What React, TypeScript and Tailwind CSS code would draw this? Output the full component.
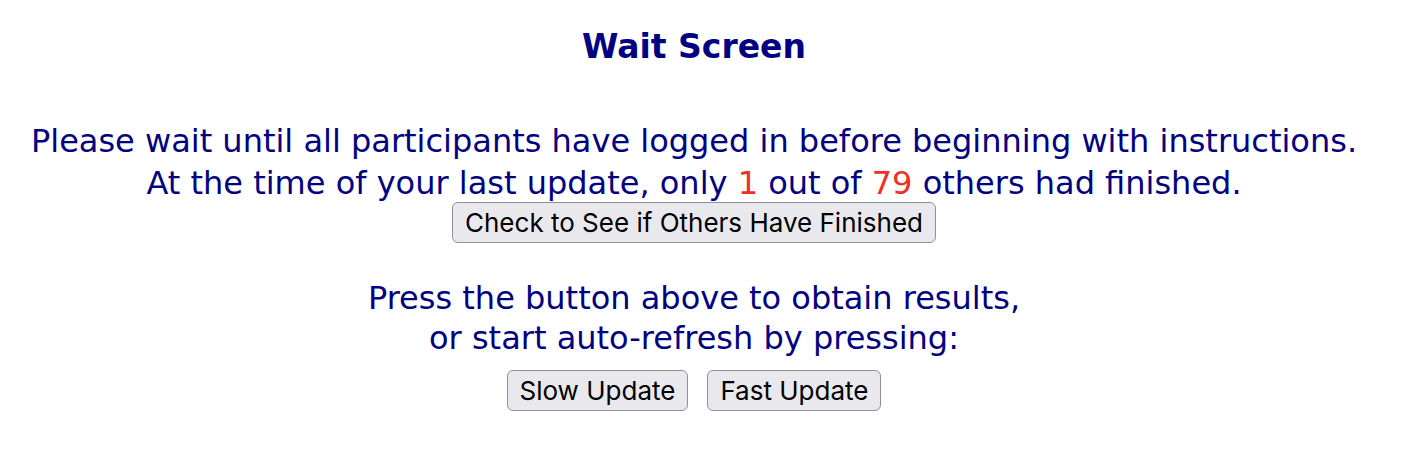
import React from 'react';

const btn =
  "h-[41px] px-[12px] rounded-[6px] border-[1.5px] border-[#8f8f9d] bg-[#e9e9ed] text-black text-[26px] leading-none font-['Inter','Liberation_Sans',sans-serif]";

const App: React.FC = () => {
  return (
    <div className="w-[1410px] h-[454px] bg-white pr-[22px] flex flex-col items-center font-['DejaVu_Sans','Verdana',sans-serif] text-[#000080]">
      <h1 className="mt-[24px] h-[46px] flex items-center text-[33px] font-bold font-['Comic_Sans_MS','DejaVu_Sans',cursive]">
        Wait Screen
      </h1>

      <div className="mt-[50px] text-[32px] leading-[42px] text-center whitespace-nowrap">
        <p>Please wait until all participants have logged in before beginning with instructions.</p>
        <p>
          At the time of your last update, only <span className="text-[#ee3124]">1</span> out of{' '}
          <span className="text-[#ee3124]">79</span> others had finished.
        </p>
      </div>
      <button className={`${btn} -mt-[2px]`}>Check to See if Others Have Finished</button>

      <div className="mt-[35px] text-[32px] leading-[40px] text-center">
        <p>Press the button above to obtain results,</p>
        <p>or start auto-refresh by pressing:</p>
      </div>
      <div className="mt-[12px] flex gap-[19px]">
        <button className={btn}>Slow Update</button>
        <button className={btn}>Fast Update</button>
      </div>
    </div>
  );
};

export default App;
